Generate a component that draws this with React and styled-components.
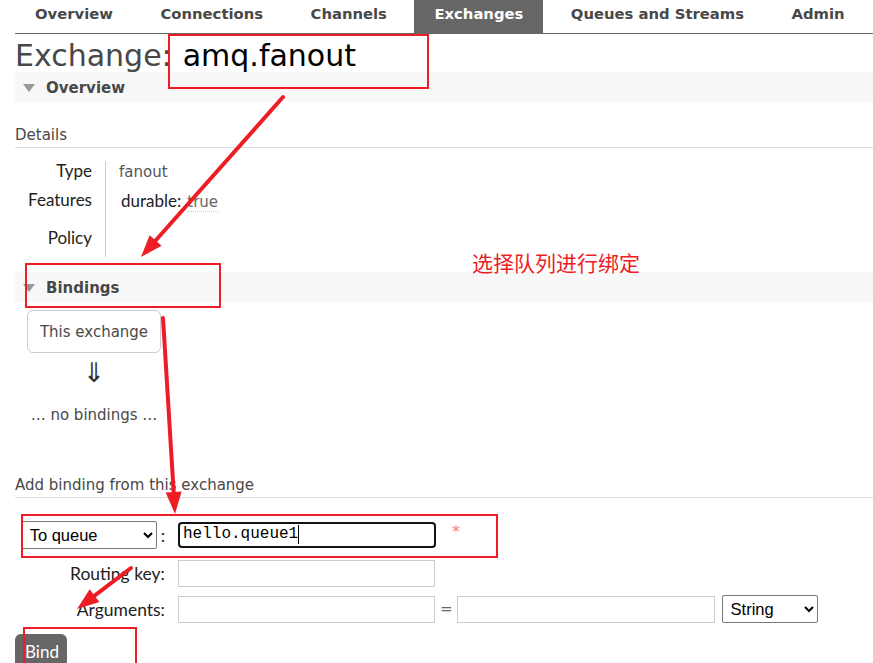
import React from 'react';
import styled, { createGlobalStyle } from 'styled-components';

const GlobalStyle = createGlobalStyle`
    body {
        margin: 0;
        background: #fff;
        font-family: "DejaVu Sans", Verdana, sans-serif;
        color: #484848;
    }
`

const Page = styled.div`
    position: relative;
    width: 873px;
    height: 663px;
    overflow: hidden;
    padding-left: 15px;
    box-sizing: border-box;
`

const Nav = styled.ul`
    display: flex;
    margin: 0;
    padding: 0;
    list-style: none;
    border-bottom: 1px solid #666;
`

const Tab = styled.li`
    height: 33px;
    box-sizing: border-box;
    padding: 5px 20px 0;
    margin-right: 7.5px;
    font-size: 14.8px;
    font-weight: bold;
    line-height: 18px;
    color: ${p => (p.active ? '#fff' : '#484848')};
    background: ${p => (p.active ? '#666' : 'transparent')};
    white-space: nowrap;
`

const Title = styled.h1`
    margin: 6px 0 0;
    height: 32px;
    font-size: 30px;
    font-weight: normal;
    line-height: 32px;
    color: #484848;
    white-space: nowrap;
`

const TitleName = styled.span`
    margin-left: 11px;
    color: #000;
`

const SectionHead = styled.div`
    display: flex;
    align-items: center;
    gap: 11px;
    height: 30px;
    box-sizing: border-box;
    margin-top: ${p => p.top || 0}px;
    padding: 1px 0 0 8px;
    background: #f8f8f8;
    font-size: 15px;
    font-weight: bold;
    color: #484848;
`

const Triangle = styled.span`
    width: 0;
    height: 0;
    border-left: 6px solid transparent;
    border-right: 6px solid transparent;
    border-top: 8px solid #999;
`

const SubHead = styled.h3`
    margin: ${p => p.top}px 0 0;
    padding-bottom: 3px;
    border-bottom: 1px solid #ddd;
    font-size: 15px;
    font-weight: normal;
    line-height: 18px;
    color: #484848;
`

const Facts = styled.div`
    display: grid;
    grid-template-columns: 90px auto;
    grid-template-rows: 29px 38px 29px;
    margin-top: 13px;
    width: 260px;
`

const FactLabel = styled.div`
    padding-right: 13px;
    text-align: right;
    font-family: Lato, "Liberation Sans", sans-serif;
    font-size: 17px;
    line-height: 20px;
    color: #222;
`

const FactValue = styled.div`
    padding-left: 13px;
    border-left: 1px solid #ccc;
    font-size: 15px;
    line-height: 22px;
    color: #555;
`

const Feature = styled.span`
    margin-left: 2px;
    font-family: Lato, "Liberation Sans", sans-serif;
    font-size: 17px;
    color: #222;
`

const Dotted = styled.abbr`
    margin-left: 6px;
    font-family: "DejaVu Sans", sans-serif;
    font-size: 15px;
    color: #666;
    text-decoration: none;
    border-bottom: 1px dotted #ccc;
`

const BindingColumn = styled.div`
    display: flex;
    flex-direction: column;
    align-items: center;
    width: 134px;
    margin: 8px 0 0 12px;
`

const ExchangeBox = styled.div`
    width: 134px;
    height: 43px;
    box-sizing: border-box;
    display: flex;
    align-items: center;
    justify-content: center;
    padding-top: 1px;
    border: 1px solid #ccc;
    border-radius: 6px;
    font-size: 15px;
    color: #484848;
`

const DownArrow = styled.div`
    height: 40px;
    font-size: 27px;
    line-height: 40px;
    color: #333;
`

const NoBindings = styled.p`
    margin: 12px 0 0;
    font-size: 15px;
    line-height: 20px;
    color: #484848;
    white-space: nowrap;
`

const Form = styled.div`
    display: grid;
    grid-template-columns: 150px auto;
    column-gap: 13px;
    margin-top: 23px;
`

const Row = styled.div`
    display: contents;
`

const RowLabel = styled.div`
    display: flex;
    align-items: center;
    justify-content: flex-end;
    height: ${p => p.h}px;
    margin-top: ${p => p.top || 0}px;
    font-family: Lato, "Liberation Sans", sans-serif;
    font-size: 17.5px;
    color: #222;
    white-space: nowrap;
`

const RowFields = styled.div`
    display: flex;
    align-items: center;
    height: ${p => p.h}px;
    margin-top: ${p => p.top || 0}px;
`

const Select = styled.select`
    width: ${p => p.w}px;
    height: 28px;
    margin-right: ${p => p.gap || 0}px;
    margin-left: ${p => p.left || 0}px;
    font-family: "Liberation Sans", Arial, sans-serif;
    font-size: 16.5px;
    color: #000;
    background: #fff;
    border: 1px solid #767676;
    border-radius: 2px;
    padding: 0 4px;
`

const TextInput = styled.input`
    width: ${p => p.w || 257}px;
    height: 27px;
    box-sizing: border-box;
    border: 1px solid #ccc;
    padding: 2px 4px;
    font-family: "Liberation Mono", monospace;
    font-size: 16px;
    outline: none;
`

const FocusedInput = styled.div`
    display: flex;
    align-items: center;
    width: 258px;
    height: 26px;
    box-sizing: border-box;
    border: 2px solid #111;
    border-radius: 4px;
    padding: 0 3px 2px;
    font-family: "Liberation Mono", monospace;
    font-size: 16px;
    color: #000;
`

const Caret = styled.span`
    width: 1px;
    height: 19px;
    background: #000;
`

const Required = styled.span`
    margin-left: 16px;
    margin-top: -8px;
    font-size: 16px;
    color: #f77;
`

const Equals = styled.span`
    margin: 0 4px 0 5px;
    font-size: 15px;
    color: #666;
`

const BindButton = styled.button`
    margin-top: 11px;
    width: 52px;
    height: 36px;
    padding: 0 0 0 10px;
    text-align: left;
    border: 0;
    border-radius: 6px;
    background: #666;
    color: #fff;
    font-family: Lato, "Liberation Sans", sans-serif;
    font-size: 17px;
    line-height: 36px;
`

const Annotation = styled.svg`
    position: absolute;
    left: 0;
    top: 0;
    pointer-events: none;
`

const Note = styled.div`
    position: absolute;
    left: 472px;
    top: 250px;
    font-family: "Noto Sans CJK SC", sans-serif;
    font-size: 21px;
    line-height: 24px;
    color: #ee1c25;
    white-space: nowrap;
`

const RED = '#ee1c25'

function Arrow({ x1, y1, x2, y2 }) {
    const dx = x2 - x1, dy = y2 - y1;
    const len = Math.hypot(dx, dy);
    const ux = dx / len, uy = dy / len;
    const head = 22, half = 8;
    const bx = x2 - ux * head, by = y2 - uy * head;
    const pts = `${x2},${y2} ${bx - uy * half},${by + ux * half} ${bx + uy * half},${by - ux * half}`;
    return (
        <g>
            <line x1={x1} y1={y1} x2={bx + ux * 2} y2={by + uy * 2} stroke={RED} strokeWidth="4" strokeLinecap="round" />
            <polygon points={pts} fill={RED} />
        </g>
    )
}

const tabs = ['Overview', 'Connections', 'Channels', 'Exchanges', 'Queues and Streams', 'Admin'];

export default function App() {
    return (
        <Page>
            <GlobalStyle />
            <Nav>
                {tabs.map(t => <Tab key={t} active={t === 'Exchanges'}>{t}</Tab>)}
            </Nav>
            <Title>Exchange:<TitleName>amq.fanout</TitleName></Title>

            <SectionHead><Triangle />Overview</SectionHead>
            <SubHead top={24}>Details</SubHead>
            <Facts>
                <FactLabel>Type</FactLabel>
                <FactValue>fanout</FactValue>
                <FactLabel>Features</FactLabel>
                <FactValue><Feature>durable:</Feature><Dotted>true</Dotted></FactValue>
                <FactLabel>Policy</FactLabel>
                <FactValue />
            </Facts>

            <SectionHead top={15}><Triangle />Bindings</SectionHead>
            <BindingColumn>
                <ExchangeBox>This exchange</ExchangeBox>
                <DownArrow>⇓</DownArrow>
                <NoBindings>… no bindings …</NoBindings>
            </BindingColumn>

            <SubHead top={51}>Add binding from this exchange</SubHead>
            <Form>
                <Row>
                    <RowLabel h={28}>
                        <Select w={136} gap={4} defaultValue="queue">
                            <option value="queue">To queue</option>
                            <option value="exchange">To exchange</option>
                        </Select>:
                    </RowLabel>
                    <RowFields h={28}>
                        <FocusedInput>hello.queue1<Caret /></FocusedInput>
                        <Required>*</Required>
                    </RowFields>
                </Row>
                <Row>
                    <RowLabel h={27} top={11}>Routing key:</RowLabel>
                    <RowFields h={27} top={11}><TextInput /></RowFields>
                </Row>
                <Row>
                    <RowLabel h={28} top={8}>Arguments:</RowLabel>
                    <RowFields h={28} top={8}>
                        <TextInput />
                        <Equals>=</Equals>
                        <TextInput w={258} />
                        <Select w={96} left={7} defaultValue="string">
                            <option value="string">String</option>
                            <option value="number">Number</option>
                        </Select>
                    </RowFields>
                </Row>
            </Form>
            <BindButton>Bind</BindButton>

            <Annotation width="873" height="663" viewBox="0 0 873 663">
                <rect x="169" y="35" width="259" height="53" fill="none" stroke={RED} strokeWidth="2" />
                <rect x="26" y="264" width="194" height="43" fill="none" stroke={RED} strokeWidth="2" />
                <rect x="22" y="515" width="475" height="42" fill="none" stroke={RED} strokeWidth="2" />
                <rect x="24" y="628" width="112" height="60" fill="none" stroke={RED} strokeWidth="2" />
                <Arrow x1={283} y1={97} x2={141} y2={257} />
                <Arrow x1={163} y1={318} x2={175} y2={514} />
                <Arrow x1={131} y1={568} x2={77} y2={609} />
            </Annotation>
            <Note>选择队列进行绑定</Note>
        </Page>
    )
}
